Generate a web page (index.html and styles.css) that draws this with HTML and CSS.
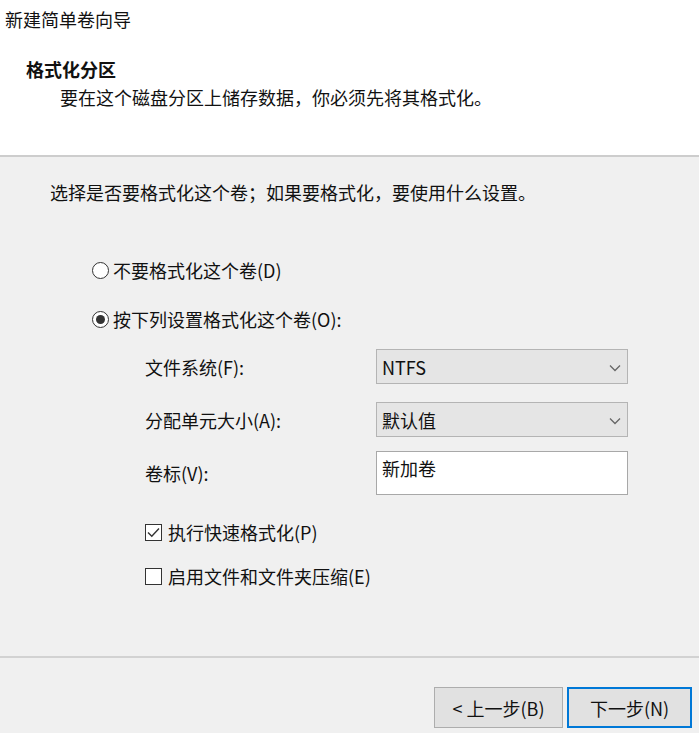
FILE: index.html
```html
<!DOCTYPE html>
<html lang="zh-CN">
<head>
    <meta charset="UTF-8">
    <meta name="viewport" content="width=device-width, initial-scale=1.0">
    <title>新建简单卷向导</title>
    <link rel="stylesheet" href="styles.css">
</head>
<body class="page">
    <div class="wizard">

        <div class="wizard__header">
            <p class="wizard__title">新建简单卷向导</p>
            <h2 class="wizard__step">格式化分区</h2>
            <p class="wizard__descr">要在这个磁盘分区上储存数据，你必须先将其格式化。</p>
        </div>

        <div class="wizard__body">
            <p class="wizard__hint">选择是否要格式化这个卷；如果要格式化，要使用什么设置。</p>

            <div class="options">
                <div class="radio">
                    <span class="radio__dot"></span>
                    <span>不要格式化这个卷(D)</span>
                </div>
                <div class="radio radio--checked">
                    <span class="radio__dot"></span>
                    <span>按下列设置格式化这个卷(O):</span>
                </div>

                <div class="form">
                    <div class="form__row">
                        <span class="form__label">文件系统(F):</span>
                        <div class="select">
                            <span>NTFS</span>
                            <svg class="select__arrow" width="12" height="8" viewBox="0 0 12 8" fill="none" stroke="#666" stroke-width="1.3"><polyline points="1 1.5 6 6.5 11 1.5"></polyline></svg>
                        </div>
                    </div>
                    <div class="form__row">
                        <span class="form__label">分配单元大小(A):</span>
                        <div class="select">
                            <span>默认值</span>
                            <svg class="select__arrow" width="12" height="8" viewBox="0 0 12 8" fill="none" stroke="#666" stroke-width="1.3"><polyline points="1 1.5 6 6.5 11 1.5"></polyline></svg>
                        </div>
                    </div>
                    <div class="form__row form__row--text">
                        <span class="form__label">卷标(V):</span>
                        <div class="textbox">新加卷</div>
                    </div>

                    <div class="check check--first">
                        <span class="check__box">
                            <svg width="13" height="11" viewBox="0 0 13 11" fill="none" stroke="#333" stroke-width="1.4"><polyline points="1 5.5 4.8 9.3 12 1.5"></polyline></svg>
                        </span>
                        <span>执行快速格式化(P)</span>
                    </div>
                    <div class="check">
                        <span class="check__box"></span>
                        <span>启用文件和文件夹压缩(E)</span>
                    </div>
                </div>
            </div>
        </div>

        <div class="wizard__footer">
            <button class="btn">&lt; 上一步(B)</button>
            <button class="btn btn--default">下一步(N)</button>
        </div>
    </div>
</body>
</html>
```

FILE: styles.css
```css
body{
    margin: 0;
    font-family: "Noto Sans CJK SC", "Noto Sans", sans-serif;
    font-size: 18px;
    color: #111;
    background: #f0f0f0;
}
*, ::after, ::before {
    box-sizing: border-box;
}
p,h2{
    margin: 0;
}
.wizard{
    width: 699px;
    height: 733px;
    display: flex;
    flex-direction: column;
}

.wizard__header{
    height: 157px;
    background: #fff;
    border-bottom: 2px solid #cdcdcd;
    padding: 7px 0 0 5px;
    line-height: 24px;
}
.wizard__step{
    font-size: 18px;
    font-weight: bold;
    margin: 26px 0 0 21px;
}
.wizard__descr{
    margin: 4px 0 0 55px;
}

.wizard__body{
    height: 499px;
    padding-left: 50px;
    line-height: 24px;
}
.wizard__hint{
    margin-top: 23px;
}
.options{
    margin: 54px 0 0 42px;
}

.radio{
    display: flex;
    align-items: center;
    gap: 4px;
    margin-bottom: 25px;
}
.radio__dot{
    width: 17px;
    height: 17px;
    border: 1px solid #333;
    border-radius: 50%;
    background: #fff;
    display: flex;
    align-items: center;
    justify-content: center;
}
.radio--checked .radio__dot::after{
    content: "";
    width: 9px;
    height: 9px;
    border-radius: 50%;
    background: #333;
}

.form{
    display: flex;
    flex-direction: column;
    margin: -7px 0 0 53px;
}
.form__row{
    display: grid;
    grid-template-columns: 231px 252px;
    align-items: center;
}
.form__row + .form__row{
    margin-top: 18px;
}
.form__row--text.form__row{
    margin-top: 14px;
}
.select{
    height: 35px;
    background: #e5e5e5;
    border: 1px solid #b4b4b4;
    display: flex;
    align-items: center;
    justify-content: space-between;
    padding: 0 6px 0 5px;
}
.select__arrow{
    margin-top: 2px;
}
.textbox{
    height: 44px;
    background: #fff;
    border: 1px solid #a8a8a8;
    padding: 4px 5px;
}

.check{
    display: flex;
    align-items: center;
    gap: 6px;
    margin-top: 20px;
}
.check--first{
    margin-top: 25px;
}
.check__box{
    width: 17px;
    height: 17px;
    border: 1px solid #333;
    background: #fff;
    display: flex;
    align-items: center;
    justify-content: center;
}

.wizard__footer{
    flex-grow: 1;
    border-top: 2px solid #d2d2d2;
    display: flex;
    justify-content: flex-end;
    align-items: flex-start;
    gap: 4px;
    padding: 29px 7px 0 0;
}
.btn{
    width: 129px;
    height: 41px;
    font-family: inherit;
    font-size: 18px;
    color: #111;
    background: #e1e1e1;
    border: 1px solid #adadad;
    padding: 0;
}
.btn--default{
    width: 125px;
    border: 2px solid #0078d7;
}
```
